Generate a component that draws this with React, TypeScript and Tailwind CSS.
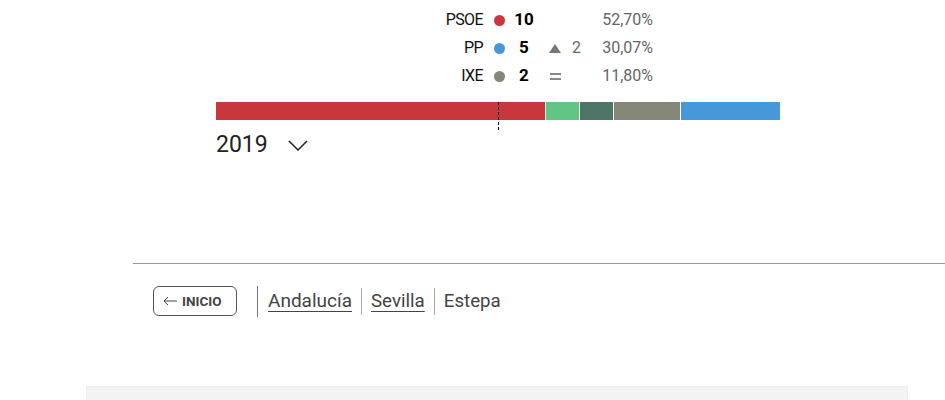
import React from "react";

type Row = {
  name: string;
  color: string;
  seats: string;
  change?: "up" | "eq";
  delta?: string;
  pct: string;
};

const rows: Row[] = [
  { name: "PSOE", color: "bg-[#c8363e]", seats: "10", pct: "52,70%" },
  { name: "PP", color: "bg-[#4698d9]", seats: "5", change: "up", delta: "2", pct: "30,07%" },
  { name: "IXE", color: "bg-[#858677]", seats: "2", change: "eq", pct: "11,80%" },
];

const segments = [
  { w: "w-[329px]", c: "bg-[#c8363e]" },
  { w: "w-[33px]", c: "bg-[#62c584]" },
  { w: "w-[33px]", c: "bg-[#4f7567]" },
  { w: "w-[66px]", c: "bg-[#858677]" },
  { w: "w-[99px]", c: "bg-[#4698d9]" },
];

function ResultRow({ row }: { row: Row }) {
  return (
    <div className="flex h-[28px] items-center">
      <span className="w-[53px] text-right text-[16px] tracking-[-0.6px] text-[#111]">{row.name}</span>
      <span className={`ml-[11px] h-[11px] w-[11px] rounded-full ${row.color}`} />
      <span className="w-[38px] text-center text-[17px] font-bold text-black">{row.seats}</span>
      <span className="flex w-[44px] items-center pl-[6px] text-[16px] text-[#666]">
        {row.change === "up" && (
          <>
            <svg width="12" height="9" viewBox="0 0 12 9">
              <path d="M6 0 L12 9 L0 9 Z" fill="#777" />
            </svg>
            <span className="ml-[11px]">{row.delta}</span>
          </>
        )}
        {row.change === "eq" && (
          <span className="ml-px flex flex-col gap-[3px]">
            <span className="block h-[2px] w-[11px] bg-[#888]" />
            <span className="block h-[2px] w-[11px] bg-[#888]" />
          </span>
        )}
      </span>
      <span className="w-[66px] text-right text-[16px] text-[#666]">{row.pct}</span>
    </div>
  );
}

export default function App() {
  return (
    <div className="h-[400px] w-[945px] overflow-hidden bg-white font-['Roboto',sans-serif]">
      <div className="ml-[430px] pt-[6px]">
        {rows.map((r) => (
          <ResultRow key={r.name} row={r} />
        ))}
      </div>

      <div className="relative ml-[216px] mt-[12px] flex h-[18px] w-[564px] gap-px">
        {segments.map((s, i) => (
          <div key={i} className={`h-full ${s.w} ${s.c}`} />
        ))}
        <div className="absolute left-[282px] top-0 h-[28px] w-px border-l border-dashed border-black" />
      </div>

      <div className="ml-[216px] mt-[8px] flex items-center">
        <span className="text-[23px] text-[#222]">2019</span>
        <svg className="ml-[20px]" width="20" height="11" viewBox="0 0 20 11">
          <path d="M1 1 L10 10 L19 1" fill="none" stroke="#222" strokeWidth="1.5" />
        </svg>
      </div>

      <div className="ml-[133px] mt-[100px] h-px bg-[#999]" />

      <div className="ml-[153px] mt-[22px] flex items-center">
        <button
          type="button"
          className="flex h-[30px] w-[84px] items-center rounded-[6px] border border-[#555] pl-[9px] text-[13.5px] font-bold text-[#444]"
        >
          <svg width="14" height="10" viewBox="0 0 14 10">
            <path d="M14 5 L1 5 M5 1 L1 5 L5 9" fill="none" stroke="#444" strokeWidth="1" />
          </svg>
          <span className="ml-[5px]">INICIO</span>
        </button>
        <span className="ml-[20px] h-[31px] w-px bg-[#777]" />
        <a className="ml-[10px] text-[19px] text-[#444] underline decoration-1 underline-offset-[4px]">Andalucía</a>
        <span className="ml-[9px] h-[27px] w-px bg-[#aaa]" />
        <a className="ml-[9px] text-[18.7px] text-[#444] underline decoration-1 underline-offset-[4px]">Sevilla</a>
        <span className="ml-[9px] h-[27px] w-px bg-[#aaa]" />
        <span className="ml-[9px] text-[18.7px] text-[#444]">Estepa</span>
      </div>

      <div className="ml-[86px] mt-[69px] h-[20px] w-[822px] border border-[#eee] bg-[#f3f3f3]" />
    </div>
  );
}
